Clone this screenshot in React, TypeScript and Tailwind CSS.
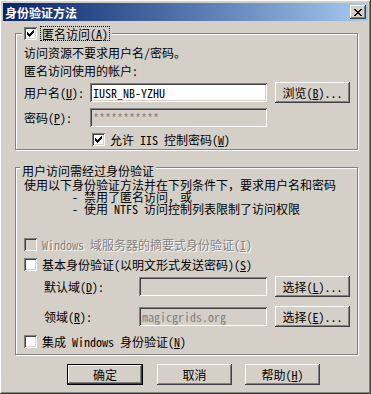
import type { ReactNode } from "react";

const raised =
  "shadow-[inset_-1px_-1px_#404040,inset_1px_1px_#fff,inset_-2px_-2px_#808080,inset_2px_2px_#d4d0c8]";
const sunken =
  "shadow-[inset_1px_1px_#808080,inset_-1px_-1px_#fff,inset_2px_2px_#404040,inset_-2px_-2px_#d4d0c8]";
const etched = "border border-[#808080] shadow-[inset_1px_1px_#fff,1px_1px_#fff]";
const grayText = "text-[#808080] [text-shadow:1px_1px_0_#fff]";

// classic 7x7 tick, one 1x3 column per x
function Tick() {
  return (
    <svg width="7" height="7" viewBox="0 0 7 7" shapeRendering="crispEdges">
      {[2, 3, 4, 3, 2, 1, 0].map((y, x) => (
        <rect key={x} x={x} y={y} width="1" height="3" fill="#000" />
      ))}
    </svg>
  );
}

function CheckBox({ checked, disabled }: { checked?: boolean; disabled?: boolean }) {
  return (
    <span
      className={`flex h-[13px] w-[13px] shrink-0 items-center justify-center ${sunken} ${
        disabled ? "bg-[#d4d0c8]" : "bg-white"
      }`}
    >
      {checked && <Tick />}
    </span>
  );
}

function Button({ children, w = "w-[75px]", isDefault }: { children: ReactNode; w?: string; isDefault?: boolean }) {
  return (
    <div
      className={`flex h-[21px] ${w} shrink-0 items-center justify-center bg-[#d4d0c8] ${
        isDefault ? "border border-black" : ""
      }`}
    >
      <div className={`flex h-full w-full items-center justify-center ${raised}`}>{children}</div>
    </div>
  );
}

function Field({ w, value, disabled }: { w: string; value?: string; disabled?: boolean }) {
  return (
    <div
      className={`flex h-[19px] ${w} shrink-0 items-center pl-[3px] ${sunken} ${
        disabled ? "bg-[#d4d0c8] text-[#808080]" : "bg-white"
      }`}
    >
      {value}
    </div>
  );
}

function Key({ k }: { k: string }) {
  return (
    <>
      (<u className="underline-offset-[1px]">{k}</u>)
    </>
  );
}

export default function App() {
  return (
    <div
      className={`flex h-[394px] w-[371px] flex-col bg-[#d4d0c8] p-[3px] font-['Noto_Sans_Mono_CJK_SC','Noto_Sans_CJK_SC',sans-serif] text-[12px] leading-[13px] text-black ${raised}`}
    >
      {/* title bar */}
      <div className="flex h-[18px] shrink-0 items-center justify-between bg-gradient-to-r from-[#0a246a] to-[#a6caf0] pl-[2px] pr-[2px]">
        <span className="font-bold text-white">身份验证方法</span>
        <div className={`flex h-[14px] w-[16px] items-center justify-center bg-[#d4d0c8] ${raised}`}>
          <svg width="8" height="7" viewBox="0 0 8 7" shapeRendering="crispEdges" fill="#000">
            <rect x="0" y="0" width="2" height="1" />
            <rect x="6" y="0" width="2" height="1" />
            <rect x="1" y="1" width="2" height="1" />
            <rect x="5" y="1" width="2" height="1" />
            <rect x="2" y="2" width="4" height="1" />
            <rect x="3" y="3" width="2" height="1" />
            <rect x="2" y="4" width="4" height="1" />
            <rect x="1" y="5" width="2" height="1" />
            <rect x="5" y="5" width="2" height="1" />
            <rect x="0" y="6" width="2" height="1" />
            <rect x="6" y="6" width="2" height="1" />
          </svg>
        </div>
      </div>

      {/* anonymous access group */}
      <div className={`ml-[12px] mt-[12px] h-[117px] w-[343px] shrink-0 ${etched}`}>
        <div className="-mt-[8px] ml-[6px] flex h-[15px] w-fit items-center gap-[3px] bg-[#d4d0c8] px-[2px]">
          <CheckBox checked />
          <span className="flex h-[15px] items-center border border-dotted border-black px-[1px]">
            匿名访问<Key k="A" />
          </span>
        </div>
        <div className="mt-[3px] flex h-[16px] items-center pl-[8px]">访问资源不要求用户名/密码。</div>
        <div className="mt-[2px] flex h-[16px] items-center pl-[8px]">匿名访问使用的帐户:</div>
        <div className="mt-[4px] flex h-[21px] items-center pl-[8px]">
          <span className="w-[66px] shrink-0">
            用户名<Key k="U" />:
          </span>
          <Field w="w-[177px]" value="IUSR_NB-YZHU" />
          <div className="ml-[8px]">
            <Button>
              浏览<Key k="B" />...
            </Button>
          </div>
        </div>
        <div className="mt-[5px] flex h-[19px] items-center pl-[8px]">
          <span className="w-[66px] shrink-0">
            密码<Key k="P" />:
          </span>
          <Field w="w-[177px]" value="***********" disabled />
        </div>
        <div className="mt-[6px] flex h-[13px] items-center gap-[5px] pl-[76px]">
          <CheckBox checked />
          <span>
            允许 IIS 控制密码<Key k="W" />
          </span>
        </div>
      </div>

      {/* authenticated access group */}
      <div className={`ml-[12px] mt-[17px] h-[188px] w-[343px] shrink-0 ${etched}`}>
        <div className="-mt-[5px] ml-[4px] flex h-[15px] w-fit items-center bg-[#d4d0c8] px-[2px]">
          用户访问需经过身份验证
        </div>
        <div className="mt-[1px] flex h-[12px] items-center pl-[8px] leading-[12px]">
          使用以下身份验证方法并在下列条件下，要求用户名和密码
        </div>
        <div className="flex h-[12px] items-center pl-[56px] leading-[12px]">
          <span className="w-[12px]">-</span>
          <span>禁用了匿名访问，或</span>
        </div>
        <div className="flex h-[12px] items-center pl-[56px] leading-[12px]">
          <span className="w-[12px]">-</span>
          <span>使用 NTFS 访问控制列表限制了访问权限</span>
        </div>
        <div className="mt-[23px] flex h-[13px] items-center gap-[5px] pl-[8px]">
          <CheckBox disabled />
          <span className={grayText}>
            Windows 域服务器的摘要式身份验证<Key k="I" />
          </span>
        </div>
        <div className="mt-[7px] flex h-[13px] items-center gap-[5px] pl-[8px]">
          <CheckBox />
          <span>
            基本身份验证(以明文形式发送密码)<Key k="S" />
          </span>
        </div>
        <div className="mt-[5px] flex h-[21px] items-center pl-[28px]">
          <span className="w-[95px] shrink-0">
            默认域<Key k="D" />:
          </span>
          <Field w="w-[128px]" disabled />
          <div className="ml-[8px]">
            <Button>
              选择<Key k="L" />...
            </Button>
          </div>
        </div>
        <div className="mt-[9px] flex h-[21px] items-center pl-[28px]">
          <span className="w-[95px] shrink-0">
            领域<Key k="R" />:
          </span>
          <Field w="w-[128px]" value="magicgrids.org" disabled />
          <div className="ml-[8px]">
            <Button>
              选择<Key k="E" />...
            </Button>
          </div>
        </div>
        <div className="mt-[8px] flex h-[13px] items-center gap-[5px] pl-[8px]">
          <CheckBox />
          <span>
            集成 Windows 身份验证<Key k="N" />
          </span>
        </div>
      </div>

      {/* dialog buttons */}
      <div className="mt-[9px] flex shrink-0 pl-[64px]">
        <Button w="w-[76px]" isDefault>
          确定
        </Button>
        <div className="ml-[14px]">
          <Button>取消</Button>
        </div>
        <div className="ml-[13px]">
          <Button>
            帮助<Key k="H" />
          </Button>
        </div>
      </div>
    </div>
  );
}
